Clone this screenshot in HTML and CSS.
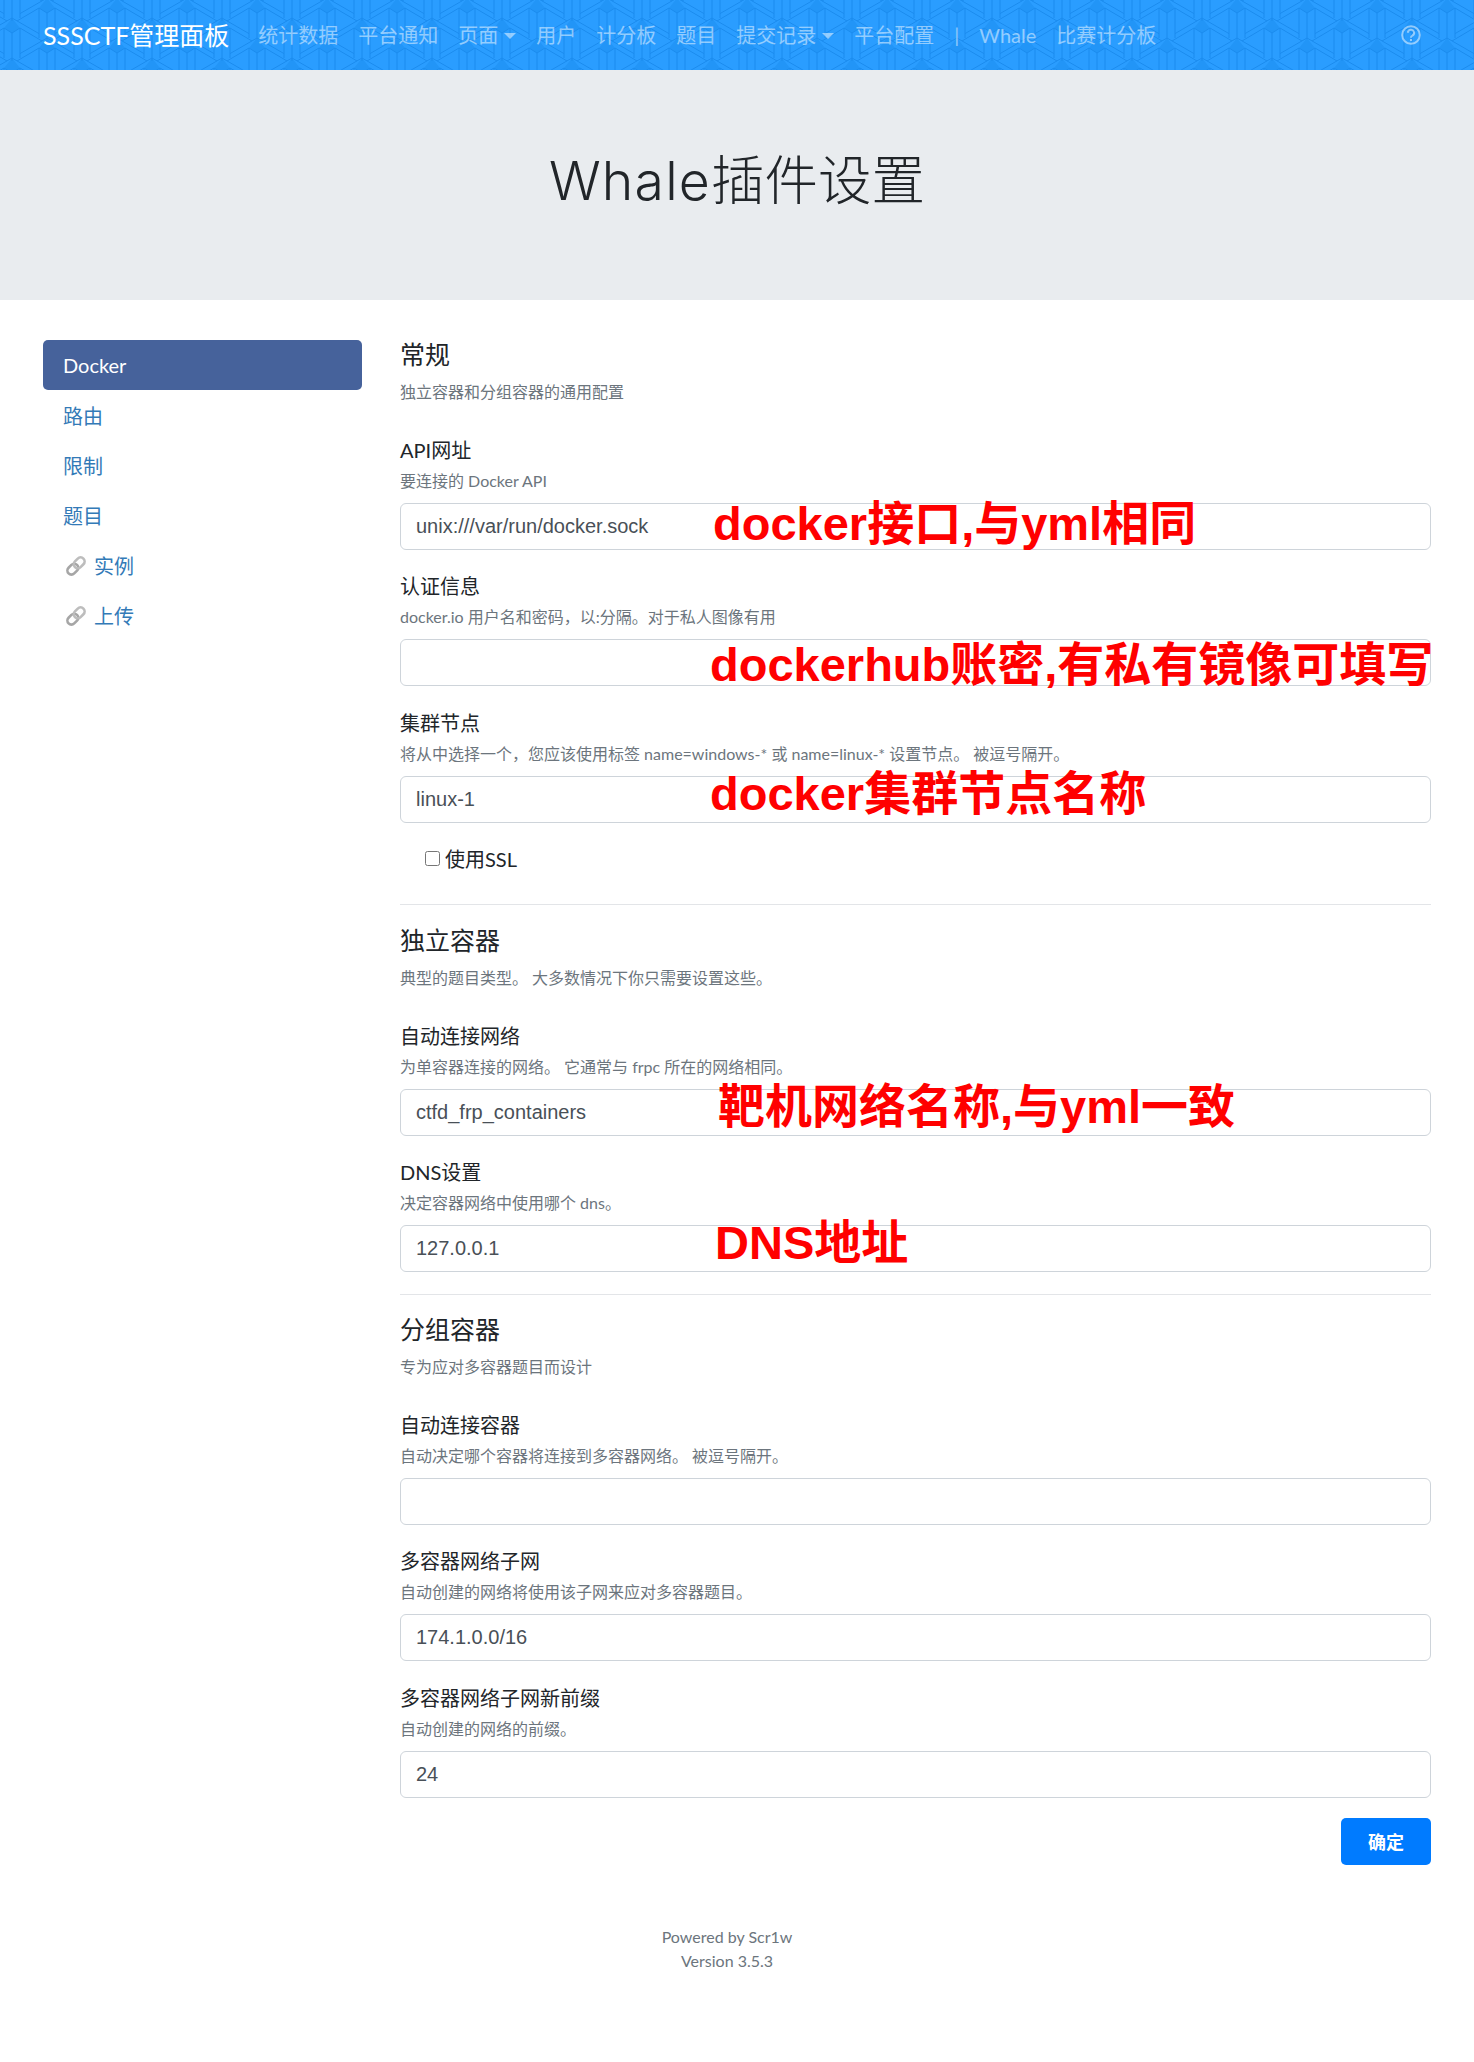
FILE: index.html
```html
<!DOCTYPE html>
<html lang="zh">
<head>
    <meta charset="utf-8"/>
    <title>Whale插件设置</title>
    <link rel="stylesheet" href="styles.css">
</head>
<body>
<nav class="topbar">
    <a class="brand" href="#">SSSCTF管理面板</a>
    <a class="nav-link" href="#">统计数据</a>
    <a class="nav-link" href="#">平台通知</a>
    <a class="nav-link caret" href="#">页面</a>
    <a class="nav-link" href="#">用户</a>
    <a class="nav-link" href="#">计分板</a>
    <a class="nav-link" href="#">题目</a>
    <a class="nav-link caret" href="#">提交记录</a>
    <a class="nav-link" href="#">平台配置</a>
    <span class="nav-link">|</span>
    <a class="nav-link" href="#">Whale</a>
    <a class="nav-link" href="#">比赛计分板</a>
    <a class="help" href="#">
        <svg width="20" height="20" viewBox="0 0 20 20" fill="none" stroke="currentColor" stroke-width="2">
            <circle cx="10" cy="10" r="8.8"/>
            <path d="M6.9 7.8a3.1 3.1 0 1 1 4.6 2.7c-1 .6-1.5 1.1-1.5 2.2"/>
            <path d="M10 14v2"/>
        </svg>
    </a>
</nav>

<header class="hero">
    <h1><span class="hero-latin">Whale</span>插件设置</h1>
</header>

<main class="page">
    <aside class="side">
        <a class="side-item active" href="#">Docker</a>
        <a class="side-item" href="#">路由</a>
        <a class="side-item" href="#">限制</a>
        <a class="side-item" href="#">题目</a>
        <a class="side-item" href="#">
            <svg class="chain" width="22" height="22" viewBox="0 0 22 22" fill="none" stroke-width="2.6">
                <g transform="rotate(-45 11 11)">
                    <rect x="0.5" y="7" width="12" height="8" rx="4" stroke="#a6a6a6"/>
                    <rect x="9.5" y="7" width="12" height="8" rx="4" stroke="#bdbdbd"/>
                </g>
            </svg>实例</a>
        <a class="side-item" href="#">
            <svg class="chain" width="22" height="22" viewBox="0 0 22 22" fill="none" stroke-width="2.6">
                <g transform="rotate(-45 11 11)">
                    <rect x="0.5" y="7" width="12" height="8" rx="4" stroke="#a6a6a6"/>
                    <rect x="9.5" y="7" width="12" height="8" rx="4" stroke="#bdbdbd"/>
                </g>
            </svg>上传</a>
    </aside>

    <form class="settings">
        <h4>常规</h4>
        <small class="lead">独立容器和分组容器的通用配置</small>

        <div class="field">
            <label>API网址</label>
            <small>要连接的 Docker API</small>
            <input type="text" value="unix:///var/run/docker.sock">
            <span class="note note-api">docker接口,与yml相同</span>
        </div>
        <div class="field">
            <label>认证信息</label>
            <small>docker.io 用户名和密码，以:分隔。对于私人图像有用</small>
            <input type="text">
            <span class="note note-auth">dockerhub账密,有私有镜像可填写</span>
        </div>
        <div class="field">
            <label>集群节点</label>
            <small>将从中选择一个，您应该使用标签 name=windows-* 或 name=linux-* 设置节点。 被逗号隔开。</small>
            <input type="text" value="linux-1">
            <span class="note note-node">docker集群节点名称</span>
        </div>
        <label class="check"><input type="checkbox">使用SSL</label>

        <hr class="hr-first">

        <h4>独立容器</h4>
        <small class="lead">典型的题目类型。 大多数情况下你只需要设置这些。</small>

        <div class="field">
            <label>自动连接网络</label>
            <small>为单容器连接的网络。 它通常与 frpc 所在的网络相同。</small>
            <input type="text" value="ctfd_frp_containers">
            <span class="note note-net">靶机网络名称,与yml一致</span>
        </div>
        <div class="field">
            <label>DNS设置</label>
            <small>决定容器网络中使用哪个 dns。</small>
            <input type="text" value="127.0.0.1">
            <span class="note note-dns">DNS地址</span>
        </div>

        <hr>

        <h4>分组容器</h4>
        <small class="lead">专为应对多容器题目而设计</small>

        <div class="field">
            <label>自动连接容器</label>
            <small>自动决定哪个容器将连接到多容器网络。 被逗号隔开。</small>
            <input type="text">
        </div>
        <div class="field">
            <label>多容器网络子网</label>
            <small>自动创建的网络将使用该子网来应对多容器题目。</small>
            <input type="text" value="174.1.0.0/16">
        </div>
        <div class="field">
            <label>多容器网络子网新前缀</label>
            <small>自动创建的网络的前缀。</small>
            <input type="text" value="24">
        </div>

        <div class="actions">
            <button type="button">确定</button>
        </div>
    </form>
</main>

<footer class="foot">
    <div>Powered by Scr1w</div>
    <div>Version 3.5.3</div>
</footer>
</body>
</html>
```

FILE: styles.css
```css
*{
    box-sizing: border-box;
}

body{
    margin: 0;
    background: #fff;
    color: #212529;
    font-family: Lato, "Noto Sans CJK SC", sans-serif;
    font-size: 20px;
    line-height: 30px;
}

a{
    text-decoration: none;
}

/* top bar */
.topbar{
    display: flex;
    align-items: center;
    height: 70px;
    padding: 0 43px;
    background-color: #2a9dff;
    background-image: url("data:image/svg+xml,%3Csvg xmlns='http://www.w3.org/2000/svg' xmlns:xlink='http://www.w3.org/1999/xlink' width='70' height='40'%3E%3Cdefs%3E%3Cg id='y' fill='none' stroke='%231a8bee' stroke-width='1'%3E%3Cpath d='M0-7L8 3 0 8-8 3Z' fill='%232295f7' stroke='none'/%3E%3Cpath d='M-8 3V33M8 3V33M0 8V36'/%3E%3Cpath d='M-27 8.6L0-7 27 8.6'/%3E%3Cpath d='M-30 16L-8 3 0 8 8 3 30 16'/%3E%3C/g%3E%3C/defs%3E%3Cuse xlink:href='%23y' x='12' y='25'/%3E%3Cuse xlink:href='%23y' x='12' y='-15'/%3E%3Cuse xlink:href='%23y' x='12' y='65'/%3E%3Cuse xlink:href='%23y' x='82' y='25'/%3E%3Cuse xlink:href='%23y' x='82' y='-15'/%3E%3Cuse xlink:href='%23y' x='47' y='5'/%3E%3Cuse xlink:href='%23y' x='47' y='45'/%3E%3Cuse xlink:href='%23y' x='-23' y='5'/%3E%3Cuse xlink:href='%23y' x='-23' y='45'/%3E%3C/svg%3E");
}

.brand{
    color: #fff;
    font-size: 25px;
    margin-right: 19px;
    white-space: nowrap;
}

.nav-link{
    color: rgba(255, 255, 255, .5);
    padding: 0 10px;
    white-space: nowrap;
}

.caret::after{
    content: "";
    display: inline-block;
    margin-left: 6px;
    vertical-align: 4px;
    border-top: 6px solid;
    border-left: 6px solid transparent;
    border-right: 6px solid transparent;
}

.help{
    margin-left: auto;
    margin-right: 10px;
    display: flex;
    color: rgba(255, 255, 255, .5);
}

/* title */
.hero{
    display: flex;
    align-items: center;
    justify-content: center;
    height: 230px;
    padding-bottom: 8px;
    background: #e9ecef;
}

.hero h1{
    margin: 0;
    font-family: Inter, "Noto Sans CJK SC", sans-serif;
    font-size: 53.5px;
    font-weight: 300;
    line-height: 62px;
}

.hero-latin{
    letter-spacing: 1.2px;
}

/* content */
.page{
    display: grid;
    grid-template-columns: 319px 1031px;
    gap: 38px;
    padding: 40px 43px 0;
}

.side-item{
    display: flex;
    align-items: center;
    height: 50px;
    padding: 2px 20px 0;
    border-radius: 5px;
    color: #337ab7;
}

.side-item.active{
    padding-top: 0;
    color: #fff;
    background: #46629b;
}

.chain{
    margin: 0 7px 0 2px;
}

.settings h4{
    margin: 0;
    height: 30px;
    font-size: 25px;
    font-weight: 400;
    line-height: 29px;
}

.settings small{
    display: block;
    color: #6c757d;
    font-size: 16px;
    line-height: 24px;
}

.settings small.lead{
    margin-top: 10px;
    margin-bottom: 30.5px;
}

.field{
    position: relative;
    margin-bottom: 21.5px;
}

.field label{
    display: block;
    margin-bottom: 4px;
}

.field input{
    display: block;
    width: 100%;
    height: 47px;
    margin-top: 10px;
    padding: 0 15px;
    border: 1px solid #ced4da;
    border-radius: 6px;
    color: #495057;
    font-family: "Liberation Sans", sans-serif;
    font-size: 20px;
}

.check{
    display: flex;
    align-items: center;
    padding-left: 25px;
}

.check input{
    width: 15px;
    height: 15px;
    margin: 0 5px 2px 0;
}

hr{
    margin: 21px 0 20.5px;
    border: 0;
    border-top: 1px solid #e3e5e8;
}

.hr-first{
    margin-top: 29.5px;
    margin-bottom: 21.5px;
}

/* red notes written over the inputs */
.note{
    position: absolute;
    color: #f00;
    font-family: "Liberation Sans", "Noto Sans CJK SC", sans-serif;
    font-size: 47px;
    font-weight: 700;
    line-height: 56px;
    white-space: nowrap;
}

.note-api{ left: 313px; top: 61px; }
.note-auth{ left: 310px; top: 66px; }
.note-node{ left: 310px; top: 58px; }
.note-net{ left: 318px; top: 58px; }
.note-dns{ left: 315px; top: 58px; }

.actions{
    display: flex;
    justify-content: flex-end;
    margin-top: -1.5px;
}

.actions button{
    width: 90px;
    height: 47px;
    border: 0;
    border-radius: 5px;
    background: #007bff;
    color: #fff;
    font-family: "Noto Sans CJK SC", sans-serif;
    font-size: 18px;
    font-weight: 700;
}

/* footer */
.foot{
    padding: 60px 20px 77px 0;
    color: #6c757d;
    font-size: 16px;
    line-height: 24px;
    text-align: center;
}
```
